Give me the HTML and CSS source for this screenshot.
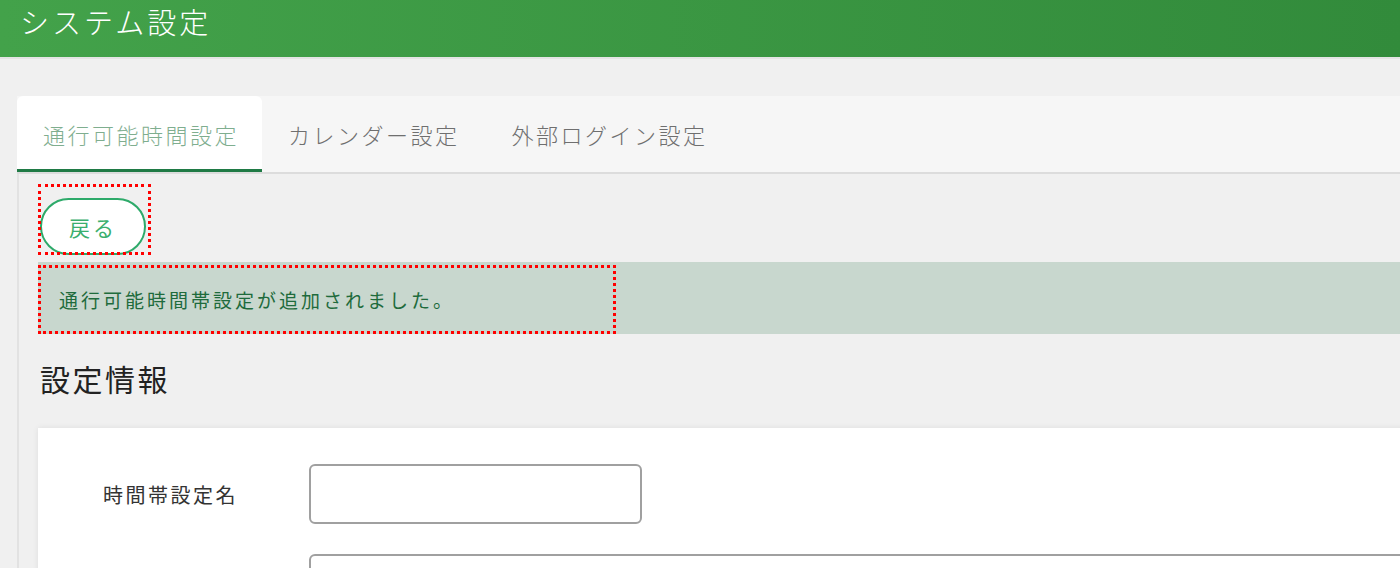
FILE: index.html
```html
<!DOCTYPE html>
<html lang="ja">
<head>
    <meta charset="UTF-8">
    <meta name="viewport" content="width=device-width, initial-scale=1.0">
    <title>システム設定</title>
    <link rel="stylesheet" href="styles.css">
</head>
<body>

    <header class="header">
        <h1>システム設定</h1>
    </header>

    <div class="main">
        <nav class="tabs">
            <div class="tab active">通行可能時間設定</div>
            <div class="tab">カレンダー設定</div>
            <div class="tab">外部ログイン設定</div>
        </nav>

        <div class="content">
            <div class="back-wrap">
                <button class="back-btn">戻る</button>
            </div>

            <div class="message">
                <div class="message-text">通行可能時間帯設定が追加されました。</div>
            </div>

            <h2 class="section-title">設定情報</h2>

            <div class="card">
                <div class="form-row">
                    <label>時間帯設定名</label>
                    <input type="text" class="input-short">
                </div>
                <div class="form-row">
                    <label></label>
                    <input type="text" class="input-long">
                </div>
            </div>
        </div>
    </div>

</body>
</html>
```

FILE: styles.css
```css
body {
    font-family: "Noto Sans CJK JP", "Noto Sans", sans-serif;
    font-weight: 300;
    background-color: #f0f0f0;
    color: #333;
    margin: 0;
    overflow: hidden;
}
.header {
    height: 57px;
    background: linear-gradient(to right, #43a24a, #328b3b);
    border-bottom: 2px solid #e4e4e4;
    padding-left: 20px;
}
.header h1 {
    margin: 0;
    font-size: 29px;
    font-weight: 300;
    letter-spacing: 3px;
    line-height: 42px;
    color: #fff;
}
.main {
    width: 1500px;
    padding: 37px 0 0 17px;
    background: #f0f0f0;
}
.tabs {
    display: flex;
    height: 76px;
    background: #f6f6f6;
    border-bottom: 2px solid #dcdcdc;
}
.tab {
    display: flex;
    align-items: center;
    padding: 0 26px;
    font-size: 22px;
    letter-spacing: 2.5px;
    color: #6f6f6f;
}
.tab.active {
    padding: 3px 23px 0 26px;
    background: #fff;
    border-radius: 6px 6px 0 0;
    border-bottom: 3px solid #1f7a45;
    color: #7fae8f;
}
.content {
    background: #f0f0f0;
    border-left: 2px solid #e2e2e2;
    padding: 10px 0 0 19px;
    min-height: 500px;
}
.back-wrap {
    width: fit-content;
    padding: 14px 5px 0 2px;
    outline: 3px dotted #f00;
    outline-offset: -3px;
    height: 57px;
}
.back-btn {
    display: block;
    width: 106px;
    height: 57px;
    border: 2px solid #2eaa6a;
    border-radius: 29px;
    background: #fff;
    color: #3aaf6e;
    font-family: inherit;
    font-weight: 400;
    font-size: 21px;
    letter-spacing: 3px;
    cursor: pointer;
}
.message {
    margin-top: 7px;
    padding-top: 3px;
    height: 69px;
    background: #c8d7ce;
}
.message-text {
    display: flex;
    align-items: center;
    width: 557px;
    height: 69px;
    padding-left: 21px;
    outline: 3px dotted #f00;
    outline-offset: -3px;
    font-size: 19px;
    font-weight: 400;
    letter-spacing: 3px;
    color: #1e6b3c;
}
.section-title {
    margin: 22px 0 27px 2px;
    font-size: 30px;
    font-weight: 400;
    letter-spacing: 2.5px;
    line-height: 45px;
    color: #222;
}
.card {
    background: #fff;
    box-shadow: 0 0 6px rgba(0, 0, 0, 0.08);
    padding: 36px 0 0 65px;
    height: 200px;
}
.form-row {
    display: flex;
    align-items: center;
    margin-bottom: 30px;
}
.form-row label {
    width: 206px;
    flex-shrink: 0;
    font-size: 20px;
    font-weight: 400;
    letter-spacing: 2.5px;
    color: #333;
}
input {
    height: 60px;
    box-sizing: border-box;
    border: 2px solid #a0a0a0;
    border-radius: 6px;
}
.input-short {
    width: 333px;
}
.input-long {
    width: 1200px;
}
```
